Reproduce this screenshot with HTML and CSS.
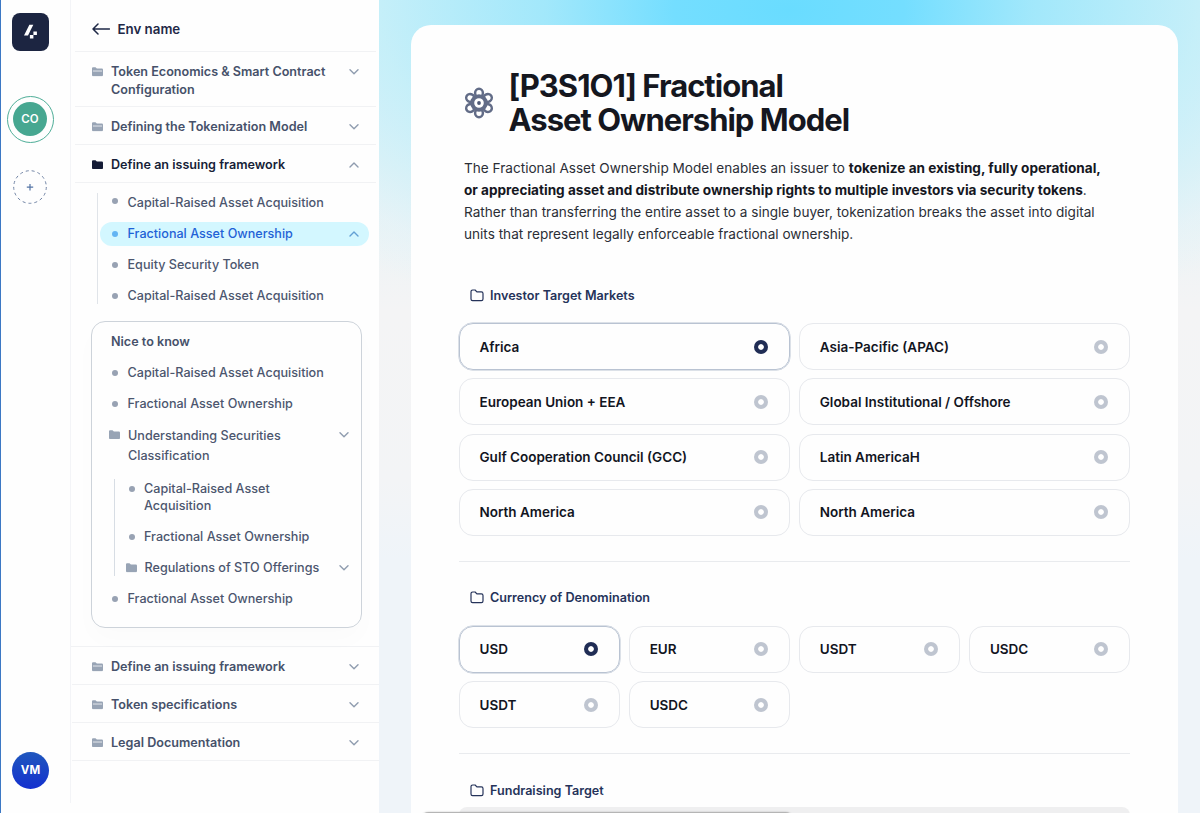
FILE: index.html
```
<!DOCTYPE html>
<html lang="en">
<head>
    <meta charset="UTF-8">
    <meta name="viewport" content="width=device-width, initial-scale=1.0">
    <title>Fractional Asset Ownership Model</title>
    <link rel="stylesheet" href="styles.css">
</head>
<body>
    <!-- shared icons -->
    <svg class="sprite" width="0" height="0">
        <symbol id="folder" viewBox="0 0 12 10">
            <path d="M0 1.4C0 .6.6 0 1.4 0h2.4l1.5 1.5h5.2c.8 0 1.5.6 1.5 1.4v5.6c0 .8-.7 1.5-1.5 1.5h-9C.7 10 0 9.3 0 8.5z"/>
        </symbol>
        <symbol id="folder-line" viewBox="0 0 12 10">
            <path d="M0 1.4C0 .6.6 0 1.4 0h2.4l1.5 1.5h5.2c.8 0 1.5.6 1.5 1.4v5.6c0 .8-.7 1.5-1.5 1.5h-9C.7 10 0 9.3 0 8.5z"/>
            <path d="M1 4.2h10" stroke="#fff" stroke-width=".8"/>
        </symbol>
        <symbol id="folder-open" viewBox="0 0 14 13">
            <path d="M1 2.6C1 1.7 1.7 1 2.6 1h2.5l1.8 1.9h4.5c.9 0 1.6.7 1.6 1.6v5.6c0 .9-.7 1.6-1.6 1.6H2.6C1.7 11.7 1 11 1 10.1z" fill="none" stroke="currentColor" stroke-width="1.2" stroke-linejoin="round"/>
        </symbol>
        <symbol id="down" viewBox="0 0 10 6">
            <path d="M1 .8l4 4 4-4" fill="none" stroke="currentColor" stroke-width="1.4" stroke-linecap="round" stroke-linejoin="round"/>
        </symbol>
        <symbol id="up" viewBox="0 0 10 6">
            <path d="M1 5l4-4 4 4" fill="none" stroke="currentColor" stroke-width="1.4" stroke-linecap="round" stroke-linejoin="round"/>
        </symbol>
    </svg>

    <div class="app">
        <nav class="rail">
            <div class="logo">
                <svg width="37" height="37" viewBox="0 0 37 37">
                    <path d="M17.4 11.8h3.9L16 22.4h-4z" fill="#fff"/>
                    <path d="M21.4 18.5h3.5V22h-3.5zM17.9 22h3.5v3.5h-3.5z" fill="#fff"/>
                </svg>
            </div>
            <div class="workspace"><span>CO</span></div>
            <div class="add">
                <svg width="34" height="34" viewBox="0 0 34 34" fill="none">
                    <circle cx="17" cy="17" r="16.3" stroke="#7184a5" stroke-width="1" stroke-dasharray="3 3"/>
                    <path d="M17 14v6.4M13.8 17.2h6.4" stroke="#5474a5" stroke-width="1.2"/>
                </svg>
            </div>
            <div class="user">VM</div>
        </nav>

        <aside class="sidebar">
            <div class="env">
                <svg width="18" height="12" viewBox="0 0 18 12"><path d="M6 1L1 6l5 5M1 6h16.5" fill="none" stroke="currentColor" stroke-width="1.5" stroke-linecap="round" stroke-linejoin="round"/></svg>
                <span>Env name</span>
            </div>

            <div class="section tall">
                <svg class="folder"><use href="#folder-line"/></svg>
                <span>Token Economics &amp; Smart Contract Configuration</span>
                <svg class="arrow"><use href="#down"/></svg>
            </div>
            <div class="section">
                <svg class="folder"><use href="#folder-line"/></svg>
                <span>Defining the Tokenization Model</span>
                <svg class="arrow"><use href="#down"/></svg>
            </div>
            <div class="section open">
                <svg class="folder"><use href="#folder"/></svg>
                <span>Define an issuing framework</span>
                <svg class="arrow"><use href="#up"/></svg>
            </div>

            <div class="content">
                <ul class="tree main-tree">
                    <li class="raised"><i></i><span>Capital-Raised Asset Acquisition</span></li>
                    <li class="active"><i></i><span>Fractional Asset Ownership</span><svg class="arrow"><use href="#up"/></svg></li>
                    <li><i></i><span>Equity Security Token</span></li>
                    <li><i></i><span>Capital-Raised Asset Acquisition</span></li>
                </ul>

                <div class="nice">
                    <h4>Nice to know</h4>
                    <ul class="tree">
                        <li><i></i><span>Capital-Raised Asset Acquisition</span></li>
                        <li><i></i><span>Fractional Asset Ownership</span></li>
                        <li class="group">
                            <svg class="folder"><use href="#folder"/></svg>
                            <span>Understanding Securities Classification</span>
                            <svg class="arrow"><use href="#down"/></svg>
                        </li>
                    </ul>
                    <ul class="tree nested">
                        <li class="two"><i></i><span>Capital-Raised Asset Acquisition</span></li>
                        <li><i></i><span>Fractional Asset Ownership</span></li>
                        <li class="sub">
                            <svg class="folder"><use href="#folder"/></svg>
                            <span>Regulations of STO Offerings</span>
                            <svg class="arrow"><use href="#down"/></svg>
                        </li>
                    </ul>
                    <ul class="tree">
                        <li><i></i><span>Fractional Asset Ownership</span></li>
                    </ul>
                </div>
            </div>

            <div class="section wide">
                <svg class="folder"><use href="#folder-line"/></svg>
                <span>Define an issuing framework</span>
                <svg class="arrow"><use href="#down"/></svg>
            </div>
            <div class="section wide">
                <svg class="folder"><use href="#folder-line"/></svg>
                <span>Token specifications</span>
                <svg class="arrow"><use href="#down"/></svg>
            </div>
            <div class="section wide">
                <svg class="folder"><use href="#folder-line"/></svg>
                <span>Legal Documentation</span>
                <svg class="arrow"><use href="#down"/></svg>
            </div>
        </aside>

        <main class="page">
            <div class="card">
                <header class="title">
                    <svg width="30" height="32" viewBox="-15 -16 30 32" fill="#fff" stroke="#626c87" stroke-width="2.5">
                        <ellipse cy="-10" rx="3.9" ry="4.2"/>
                        <ellipse cy="-10" rx="3.9" ry="4.2" transform="rotate(60)"/>
                        <ellipse cy="-10" rx="3.9" ry="4.2" transform="rotate(120)"/>
                        <ellipse cy="-10" rx="3.9" ry="4.2" transform="rotate(180)"/>
                        <ellipse cy="-10" rx="3.9" ry="4.2" transform="rotate(240)"/>
                        <ellipse cy="-10" rx="3.9" ry="4.2" transform="rotate(300)"/>
                        <circle r="6.8" stroke-width="4"/>
                        <circle r="1.9" fill="#4d5875" stroke="none"/>
                    </svg>
                    <h1>[P3S1O1] Fractional<br>Asset Ownership Model</h1>
                </header>

                <p class="intro">The Fractional Asset Ownership Model enables an issuer to <b>tokenize an existing, fully operational,<br>or appreciating asset and distribute ownership rights to multiple investors via security tokens</b>.<br>Rather than transferring the entire asset to a single buyer, tokenization breaks the asset into digital<br>units that represent legally enforceable fractional ownership.</p>

                <section class="question">
                    <h2><svg width="14" height="13"><use href="#folder-open"/></svg>Investor Target Markets</h2>
                    <div class="options two-cols">
                        <label class="option selected">Africa<i></i></label>
                        <label class="option">Asia-Pacific (APAC)<i></i></label>
                        <label class="option">European Union + EEA<i></i></label>
                        <label class="option">Global Institutional / Offshore<i></i></label>
                        <label class="option">Gulf Cooperation Council (GCC)<i></i></label>
                        <label class="option">Latin AmericaH<i></i></label>
                        <label class="option">North America<i></i></label>
                        <label class="option">North America<i></i></label>
                    </div>
                </section>

                <section class="question">
                    <h2><svg width="14" height="13"><use href="#folder-open"/></svg>Currency of Denomination</h2>
                    <div class="options four-cols">
                        <label class="option selected">USD<i></i></label>
                        <label class="option">EUR<i></i></label>
                        <label class="option">USDT<i></i></label>
                        <label class="option">USDC<i></i></label>
                        <label class="option">USDT<i></i></label>
                        <label class="option">USDC<i></i></label>
                    </div>
                </section>

                <section class="question last">
                    <h2><svg width="14" height="13"><use href="#folder-open"/></svg>Fundraising Target</h2>
                    <div class="target"></div>
                </section>
            </div>
            <div class="dock"></div>
        </main>
    </div>
</body>
</html>
```
FILE: styles.css
```
* {
    box-sizing: border-box;
}

body {
    margin: 0;
    height: 813px;
    overflow: hidden;
    font-family: Inter, "Liberation Sans", sans-serif;
    font-size: 12.6px;
    color: #46516a;
    background: #fefefe;
}

ul, h1, h2, h4, p {
    margin: 0;
    padding: 0;
    list-style: none;
}

.sprite {
    position: absolute;
}

.app {
    display: flex;
    height: 813px;
    border-left: 1px solid #3c78c4;
}

/* left rail */
.rail {
    width: 69px;
    height: 803px;
    padding: 13px 0 14px 6px;
    display: flex;
    flex-direction: column;
    flex-shrink: 0;
}

.logo {
    width: 37px;
    height: 38px;
    margin-left: 5px;
    border-radius: 8px;
    background: #1c2541;
}

.workspace {
    width: 47px;
    height: 47px;
    margin-top: 45px;
    border: 1px solid #4fae98;
    border-radius: 50%;
    display: flex;
    align-items: center;
    justify-content: center;
}

.workspace span {
    width: 34px;
    height: 34px;
    margin: -1px 0 0 -1px;
    border-radius: 50%;
    background: #47a791;
    color: #fff;
    font-size: 11.5px;
    font-weight: 600;
    line-height: 34px;
    text-align: center;
}

.add {
    height: 34px;
    margin: 26.5px 0 0 6px;
}

.user {
    width: 37px;
    height: 37px;
    margin: auto 0 0 5px;
    border-radius: 50%;
    background: linear-gradient(#1f57bd, #1430cf);
    color: #fff;
    font-size: 11.5px;
    font-weight: 700;
    line-height: 37px;
    text-align: center;
}

/* sidebar */
.sidebar {
    width: 309px;
    flex-shrink: 0;
    height: 803px;
    border-left: 1px solid #f3f4f7;
}

.env {
    height: 52px;
    margin: 0 3px 0 4px;
    padding: 6px 0 0 17px;
    display: flex;
    align-items: center;
    gap: 7.5px;
    border-bottom: 1px solid #f1f2f4;
    color: #1f2947;
    font-size: 13.3px;
    font-weight: 600;
}

.section {
    height: 37.7px;
    margin: 0 3px 0 4px;
    padding: 11px 17px 0 17px;
    display: flex;
    align-items: flex-start;
    border-bottom: 1px solid #f1f2f4;
    font-weight: 600;
    line-height: 17.6px;
}

.section.tall {
    height: 55.3px;
}

.section.wide {
    margin: 0 0 0 1px;
    padding: 11px 20px 0 20px;
}

.section span {
    flex: 1;
}

.section.open {
    color: #171f38;
}

.section.open .folder {
    fill: #141b36;
}

.folder {
    width: 11px;
    height: 9.5px;
    margin: 4px 8px 0 0;
    fill: #98a4b5;
    flex-shrink: 0;
}

.arrow {
    width: 10px;
    height: 6px;
    margin-top: 6px;
    color: #8f9caf;
    flex-shrink: 0;
}

.content {
    height: 464.8px;
    padding: 4.5px 10px 0 20px;
    border-bottom: 1px solid #f1f2f4;
}

.tree li {
    display: flex;
    align-items: center;
    height: 31px;
    font-weight: 500;
    line-height: 17.6px;
    color: #4c566e;
}

.tree li span {
    flex: 1;
}

.tree i {
    width: 6px;
    height: 6px;
    margin-right: 9.5px;
    border-radius: 50%;
    background: #98a2b3;
    flex-shrink: 0;
}

.main-tree {
    position: relative;
    padding-left: 9px;
}

/* guide line beside the list */
.main-tree::before {
    content: "";
    position: absolute;
    left: 6px;
    top: 6px;
    width: 1px;
    height: 111px;
    background: #e0e4e9;
}

.main-tree li {
    padding-left: 12px;
}

.main-tree .raised i {
    margin-top: -4px;
}

.tree .active {
    height: 24px;
    margin: 3.5px 0;
    padding-right: 10px;
    border-radius: 12px;
    background: #d3f7ff;
    color: #1f62d6;
}

.tree .active i {
    background: #62b4f3;
}

.tree .active .arrow {
    margin-top: 0;
    color: #62a0d4;
}

.nice {
    width: 271px;
    height: 307px;
    margin-top: 9.5px;
    padding: 10px 12px 0 20px;
    border: 1px solid #cdd3da;
    border-radius: 14px;
    box-shadow: 0 12px 24px rgba(0, 0, 0, 0.015);
}

.nice h4 {
    height: 26px;
    margin-left: -1px;
    font-size: 12.6px;
    font-weight: 600;
    line-height: 20px;
}

.nice .tree .group {
    height: 53px;
    align-items: flex-start;
    padding-top: 6px;
    margin-left: -3px;
    line-height: 20px;
}

.nested {
    padding-left: 16.5px;
    position: relative;
}

.nested::before {
    content: "";
    position: absolute;
    left: 2px;
    top: 6px;
    width: 1px;
    height: 97px;
    background: #d7dde4;
}

.nested .two {
    height: 49px;
    align-items: flex-start;
    padding: 7px 60px 0 0;
}

.nested .two i {
    margin-top: 6px;
}

.nested .sub {
    margin-left: -3px;
}

.sub .folder,
.sub .arrow {
    margin-top: 0;
}

/* main area */
.page {
    flex: 1;
    position: relative;
    overflow: hidden;
    padding: 25px 22px 0 32px;
    background:
        radial-gradient(ellipse 640px 340px at 410px 10px, #69dcff 0%, #74deff 18%, rgba(152, 230, 252, 0.85) 38%, rgba(190, 238, 250, 0.75) 64%, rgba(220, 242, 249, 0.4) 88%, rgba(244, 244, 245, 0) 100%),
        linear-gradient(#d9f2f6, #f4f4f5 310px, #f3f4f6 480px, #eff4f9 560px);
}

.card {
    height: 788px;
    overflow: hidden;
    padding: 44px 48px 0 47.5px;
    border-radius: 20px 20px 0 0;
    background: #fefefe;
}

.title {
    display: flex;
    align-items: center;
    padding-left: 5px;
    gap: 15px;
}

.title h1 {
    color: #15171f;
    font-size: 31px;
    font-weight: 700;
    line-height: 34px;
    letter-spacing: -1px;
}

.intro {
    margin: 20px 0 0 5.5px;
    color: #2b2e36;
    font-size: 13.6px;
    line-height: 22px;
    white-space: nowrap;
}

.intro b {
    color: #15171f;
    font-weight: 700;
}

.question {
    padding: 25px 0 25px 0;
    border-bottom: 1px solid #e9ebee;
}

.intro + .question {
    padding-top: 39px;
}

.question.last {
    border-bottom: none;
}

.question h2 {
    display: flex;
    align-items: center;
    gap: 6.5px;
    height: 22px;
    padding-left: 11px;
    color: #25335a;
    font-size: 12.6px;
    font-weight: 600;
}

.options {
    display: grid;
    gap: 8.3px 9px;
    margin-top: 17px;
}

.two-cols {
    grid-template-columns: repeat(2, 1fr);
}

.four-cols {
    grid-template-columns: repeat(4, 1fr);
}

.option {
    display: flex;
    align-items: center;
    justify-content: space-between;
    height: 47px;
    padding: 0 21px 0 20px;
    border: 1px solid #e7e9ed;
    border-radius: 14px;
    color: #12151f;
    font-size: 13.5px;
    font-weight: 600;
}

.option i {
    width: 14px;
    height: 14px;
    border-radius: 50%;
    background: radial-gradient(circle, #fff 2.4px, #bfc5d0 3.2px);
}

.option.selected {
    border-color: #b9c3d2;
    box-shadow: 0 0 0 0.5px #b9c3d2;
}

.option.selected i {
    background: radial-gradient(circle, #fff 2.4px, #202d55 3.2px);
}

.target {
    height: 48px;
    margin-top: 6px;
    border-radius: 8px;
    background: #efeff0;
}

/* top edge of the bar below the fold */
.dock {
    position: absolute;
    left: 40px;
    top: 812px;
    width: 376px;
    height: 20px;
    border-radius: 10px;
    background: #b5b5b5;
    box-shadow: 0 0 2px rgba(0, 0, 0, 0.25);
}
```
